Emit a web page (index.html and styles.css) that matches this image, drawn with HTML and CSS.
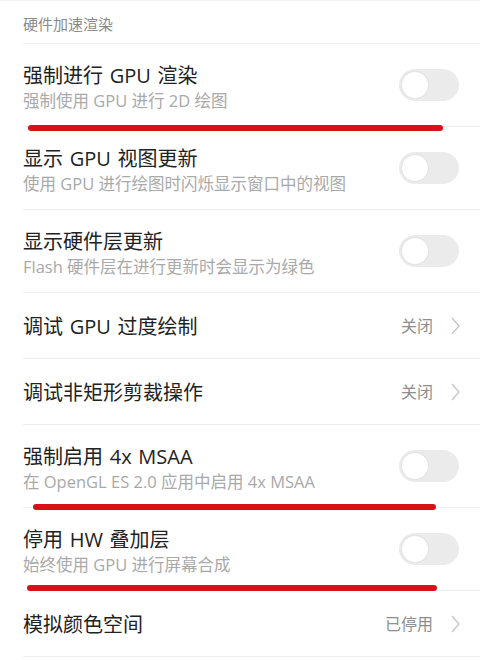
FILE: index.html
```html
<!DOCTYPE html>
<html lang="zh-CN">
<head>
<meta charset="utf-8">
<title>硬件加速渲染</title>
<link rel="stylesheet" href="styles.css">
</head>
<body>
<div class="page">
  <div class="section-head"><span>硬件加速渲染</span></div>

  <div class="row two">
    <div class="text">
      <div class="title">强制进行 GPU 渲染</div>
      <div class="sub">强制使用 GPU 进行 2D 绘图</div>
    </div>
    <div class="toggle"><div class="knob"></div></div>
  </div>

  <div class="row two">
    <div class="text">
      <div class="title">显示 GPU 视图更新</div>
      <div class="sub">使用 GPU 进行绘图时闪烁显示窗口中的视图</div>
    </div>
    <div class="toggle"><div class="knob"></div></div>
  </div>

  <div class="row two">
    <div class="text">
      <div class="title">显示硬件层更新</div>
      <div class="sub">Flash 硬件层在进行更新时会显示为绿色</div>
    </div>
    <div class="toggle"><div class="knob"></div></div>
  </div>

  <div class="row one">
    <div class="text"><div class="title">调试 GPU 过度绘制</div></div>
    <div class="value">关闭<span class="chev"><svg width="9" height="18" viewBox="0 0 9 18"><path d="M1 1 L8 9 L1 17" fill="none" stroke="#c6c6c6" stroke-width="1.4"/></svg></span></div>
  </div>

  <div class="row one">
    <div class="text"><div class="title">调试非矩形剪裁操作</div></div>
    <div class="value">关闭<span class="chev"><svg width="9" height="18" viewBox="0 0 9 18"><path d="M1 1 L8 9 L1 17" fill="none" stroke="#c6c6c6" stroke-width="1.4"/></svg></span></div>
  </div>

  <div class="row two">
    <div class="text">
      <div class="title">强制启用 4x MSAA</div>
      <div class="sub">在 OpenGL ES 2.0 应用中启用 4x MSAA</div>
    </div>
    <div class="toggle"><div class="knob"></div></div>
  </div>

  <div class="row two">
    <div class="text">
      <div class="title">停用 HW 叠加层</div>
      <div class="sub">始终使用 GPU 进行屏幕合成</div>
    </div>
    <div class="toggle"><div class="knob"></div></div>
  </div>

  <div class="row one">
    <div class="text"><div class="title">模拟颜色空间</div></div>
    <div class="value">已停用<span class="chev"><svg width="9" height="18" viewBox="0 0 9 18"><path d="M1 1 L8 9 L1 17" fill="none" stroke="#c6c6c6" stroke-width="1.4"/></svg></span></div>
  </div>

  <div class="mark mark-1"></div>
  <div class="mark mark-2"></div>
  <div class="mark mark-3"></div>
</div>
</body>
</html>
```

FILE: styles.css
```css
html, body {
  margin: 0;
  padding: 0;
  background: #ffffff;
}
body {
  font-family: "Open Sans", "Noto Sans CJK SC", sans-serif;
  color: #222222;
}
.page {
  position: relative;
  width: 480px;
  height: 660px;
  overflow: hidden;
  border-top: 1px solid #f3f3f3;
  box-sizing: border-box;
}
.section-head {
  margin-left: 23px;
  height: 43px;
  box-sizing: border-box;
  padding-top: 13px;
  border-bottom: 1px solid #efefef;
  font-size: 15px;
  line-height: 20px;
  color: #8a8a8a;
}
.row {
  margin-left: 23px;
  padding-right: 20px;
  display: flex;
  align-items: center;
  justify-content: space-between;
  border-bottom: 1px solid #efefef;
  box-sizing: border-box;
}
.row.two {
  height: 83px;
  padding-top: 4px;
}
.row.one {
  height: 66px;
  padding-top: 2px;
}
.text {
  display: flex;
  flex-direction: column;
  gap: 0;
}
.title {
  font-size: 20px;
  line-height: 28px;
  word-spacing: 1.5px;
  color: #222222;
}
.sub {
  font-size: 16.5px;
  line-height: 22px;
  color: #a9a9a9;
}
.toggle {
  width: 60px;
  height: 32px;
  border-radius: 16px;
  background: #ebebeb;
  display: flex;
  align-items: center;
  padding-left: 3px;
  box-sizing: border-box;
  margin-right: 1px;
  margin-top: -4px;
}
.knob {
  width: 26px;
  height: 26px;
  border-radius: 50%;
  background: #ffffff;
  box-shadow: 0 0 0 1px #e2e2e2;
}
.value {
  display: flex;
  align-items: center;
  font-size: 16px;
  color: #8e8e8e;
  line-height: 22px;
  margin-top: -2px;
}
.chev {
  display: flex;
  margin-left: 18px;
}
.mark {
  position: absolute;
  height: 6px;
  border-radius: 3px;
  background: #d8101a;
}
.mark-1 { left: 28px; width: 415px; top: 124px; }
.mark-2 { left: 33px; width: 403px; top: 503px; }
.mark-3 { left: 27px; width: 410px; top: 584px; }
```
